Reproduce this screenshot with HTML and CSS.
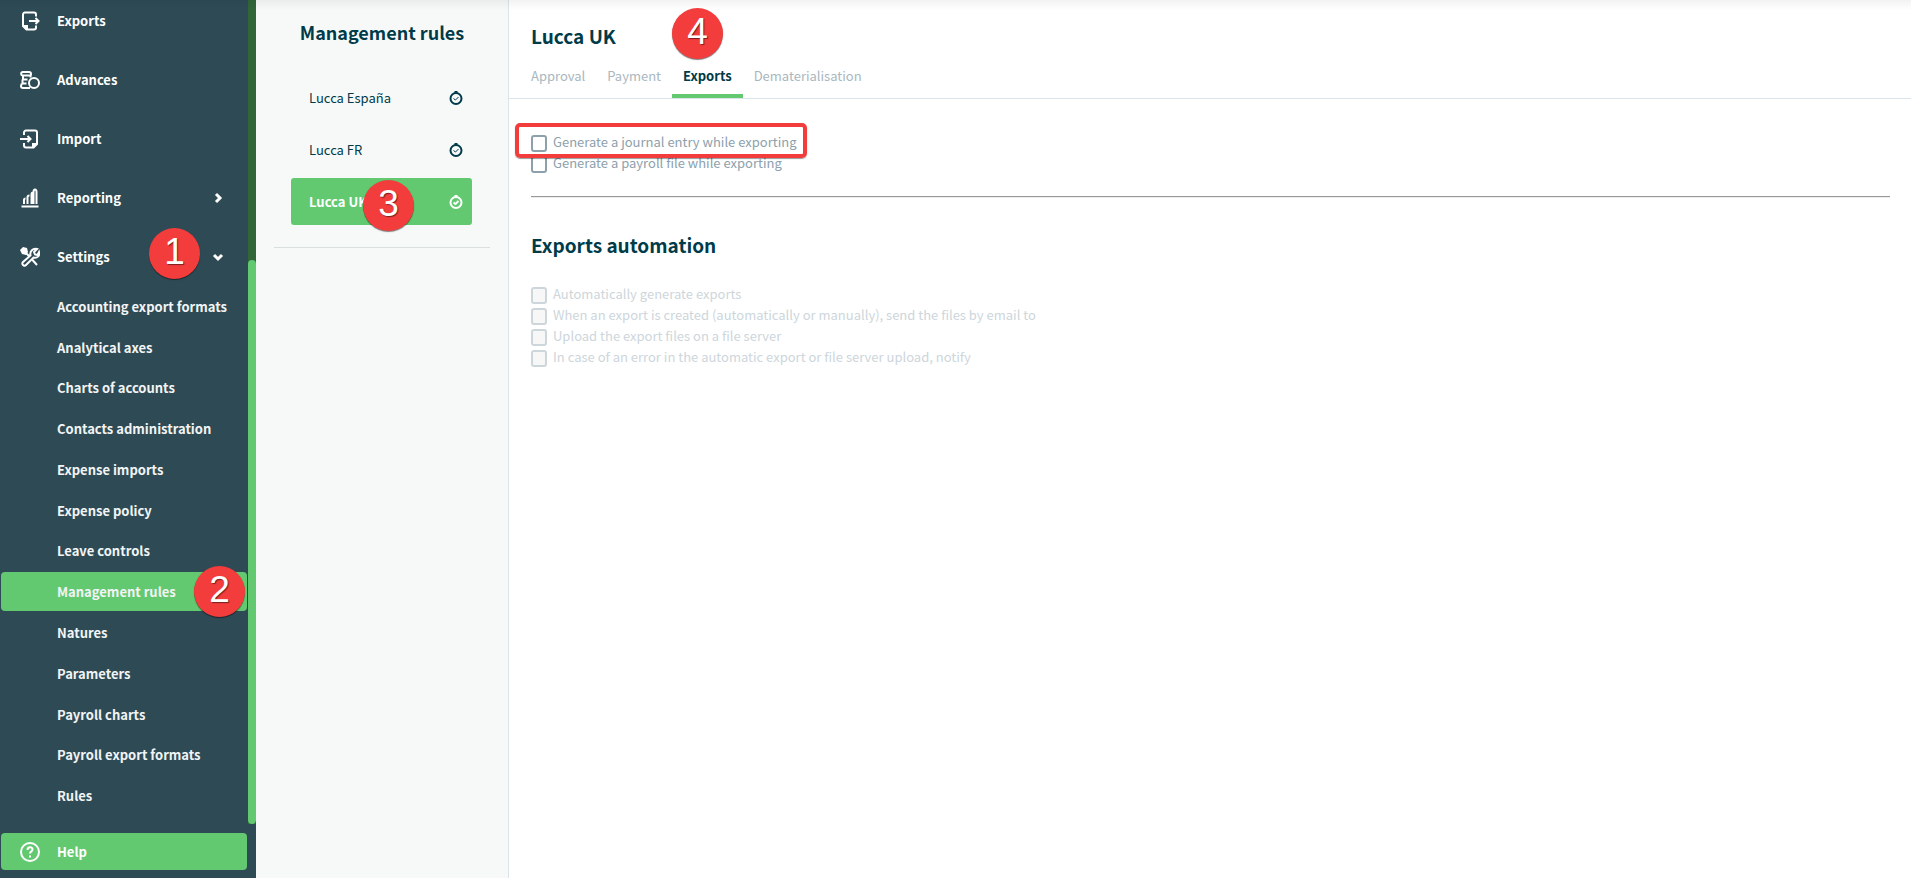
FILE: index.html
```html
<!DOCTYPE html>
<html lang="en">
<head>
<meta charset="utf-8">
<title>Management rules</title>
<link rel="stylesheet" href="styles.css">
</head>
<body>
<div class="app">
  <aside class="sidebar">
    <div class="scroll-area">
      <nav class="menu">
        <a class="menu-item" href="#"><svg class="icon" viewBox="0 0 20 20"><path d="M16 5.500V3.500a2 2 0 0 0-2-2H5a2 2 0 0 0-2 2V15l3.500 3.500H14a2 2 0 0 0 2-2V14.500M9 10h9M15.500 7l3 3-3 3"/><path class="fill" d="M2 14h6v5H6z"/></svg>Exports</a>
        <a class="menu-item" href="#"><svg class="icon" viewBox="0 0 20 20"><path d="M11 5.500V4q0-2-2-2H3Q1.200 2 1.200 3.800T3 5.500h7.500M3 5.500v4h4.500M2.500 9.500v4h4M2.500 13.500Q1 14 1 16t2 2h7M10.500 5.500v2"/><circle cx="14" cy="13" r="5"/></svg>Advances</a>
        <a class="menu-item" href="#"><svg class="icon" viewBox="0 0 20 20"><path d="M4 6V3.500a2 2 0 0 1 2-2h9a2 2 0 0 1 2 2V15l-3.500 3.500H6a2 2 0 0 1-2-2V14M0 10h10M7.500 7l3 3-3 3"/><path class="fill" d="M18 14h-6v5h2z"/></svg>Import</a>
        <a class="menu-item" href="#"><svg class="icon" viewBox="0 0 20 20"><path d="M1.500 18.500h17M4 16v-4q0-1.500 1.500-1.500M7.500 16V9Q7.500 7.500 9.500 7.500M11.500 16V6.500Q11.500 4.500 13 4.500M13.500 16V4q0-2.500 1.500-2.500T16.500 4v12"/></svg>Reporting<svg class="chevron" viewBox="0 0 12 12"><path d="M4 2l4 4-4 4"/></svg></a>
        <a class="menu-item" href="#"><svg class="icon" viewBox="0 0 20 20"><path class="fill" d="M0 3l3-3 4 1 1 4-2 3-4-1z"/><path d="M6 6l3 3M12.500 13l4.500 5M10.500 8.500C9.500 4 13 1 17 2l-3 3 1 2.500 2.500.5L19 5c1 4-2 6.500-5.500 5.500L6 18c-2 2-5-1-3-3z"/></svg>Settings<svg class="chevron" viewBox="0 0 12 12"><path d="M2 4l4 4 4-4"/></svg><span class="badge badge-1">1</span></a>
      </nav>
      <nav class="submenu">
        <a href="#">Accounting export formats</a>
        <a href="#">Analytical axes</a>
        <a href="#">Charts of accounts</a>
        <a href="#">Contacts administration</a>
        <a href="#">Expense imports</a>
        <a href="#">Expense policy</a>
        <a href="#">Leave controls</a>
        <a class="active" href="#">Management rules<span class="badge badge-2">2</span></a>
        <a href="#">Natures</a>
        <a href="#">Parameters</a>
        <a href="#">Payroll charts</a>
        <a href="#">Payroll export formats</a>
        <a href="#">Rules</a>
      </nav>
      <div class="scrollbar"><div class="thumb"></div></div>
    </div>
    <a class="help" href="#"><svg class="icon" viewBox="0 0 20 20"><circle cx="10" cy="10" r="9"/><path d="M7.500 8c0-3.500 5-3.500 5-.5 0 2-2.500 2-2.500 4M10 13.500v2"/></svg>Help</a>
  </aside>

  <section class="panel">
    <h2 class="panel-title">Management rules</h2>
    <nav class="rules">
      <a href="#">Lucca España<svg class="clock" viewBox="0 0 14 14"><circle cx="7" cy="7.500" r="5.500"/><path d="M5.500 1h3"/><path class="tick" d="M4.500 7.500l2 1.500 3-3"/></svg></a>
      <a href="#">Lucca FR<svg class="clock" viewBox="0 0 14 14"><circle cx="7" cy="7.500" r="5.500"/><path d="M5.500 1h3"/><path class="tick" d="M4.500 7.500l2 1.500 3-3"/></svg></a>
      <a class="active" href="#">Lucca UK<svg class="clock" viewBox="0 0 14 14"><circle cx="7" cy="7.500" r="5.500"/><path d="M5.500 1h3"/><path class="tick" d="M4.500 7.500l2 1.500 3-3"/></svg><span class="badge badge-3">3</span></a>
    </nav>
  </section>

  <main class="content">
    <header class="header">
      <h1>Lucca UK</h1>
      <nav class="tabs">
        <a href="#">Approval</a>
        <a href="#">Payment</a>
        <a class="active" href="#">Exports<span class="badge badge-4">4</span></a>
        <a href="#">Dematerialisation</a>
      </nav>
    </header>
    <div class="form">
      <div class="checks">
        <label class="highlight"><input type="checkbox">Generate a journal entry while exporting</label>
        <label><input type="checkbox">Generate a payroll file while exporting</label>
      </div>
      <hr>
      <h2>Exports automation</h2>
      <div class="checks">
        <label class="disabled"><input type="checkbox" disabled>Automatically generate exports</label>
        <label class="disabled"><input type="checkbox" disabled>When an export is created (automatically or manually), send the files by email to</label>
        <label class="disabled"><input type="checkbox" disabled>Upload the export files on a file server</label>
        <label class="disabled"><input type="checkbox" disabled>In case of an error in the automatic export or file server upload, notify</label>
      </div>
    </div>
  </main>
</div>
</body>
</html>
```
FILE: styles.css
```css
* { box-sizing: border-box; }

body {
  margin: 0;
  font-family: "Noto Sans CJK SC", "Open Sans", sans-serif;
  font-size: 13px;
  line-height: 21px;
  color: #003b49;
}

a { color: inherit; text-decoration: none; }
h1, h2 { margin: 0; font-weight: 700; line-height: 28px; }
svg { fill: none; stroke: currentColor; stroke-width: 2; flex: none; }

.app {
  position: relative;
  display: flex;
  height: 100vh;
  min-height: 640px;
  overflow: hidden;
}

.app::after {
  content: "";
  position: absolute;
  inset: 0 0 auto 0;
  height: 10px;
  background: linear-gradient(rgba(0, 0, 0, .05), transparent);
  pointer-events: none;
}

/* Sidebar */
.sidebar {
  display: flex;
  flex-direction: column;
  flex: none;
  width: 256px;
  background: #2e4b55;
  color: #fff;
}

.scroll-area {
  position: relative;
  display: flex;
  flex-direction: column;
  flex: 1;
  min-height: 0;
  padding: 0 9px 8px 1px;
}

.menu { margin-top: -9px; }

.menu-item, .help {
  position: relative;
  display: flex;
  align-items: center;
  font-size: 13px;
  font-weight: 700;
}

.menu-item { height: 59px; padding: 0 23px 0 19px; }
.icon { width: 20px; height: 20px; margin-right: 17px; }
.icon .fill { fill: currentColor; stroke: none; }
.chevron { width: 12px; height: 12px; margin-left: auto; stroke-width: 3; }

.submenu { display: flex; flex-direction: column; flex: 1; }

.submenu a {
  position: relative;
  display: flex;
  align-items: center;
  flex: 1;
  margin: 1px 0;
  padding-left: 56px;
  border-radius: 4px;
  color: #f2f4f5;
  font-weight: 700;
}

.submenu .active, .help { background: #62c971; }

.scrollbar {
  position: absolute;
  inset: 0 0 0 auto;
  display: flex;
  align-items: flex-end;
  width: 8px;
  background: #316639;
}

.thumb { width: 8px; height: 68.5%; border-radius: 4px; background: #62c971; }

.help {
  height: 37px;
  margin: 9px 9px 8px 1px;
  padding-left: 19px;
  border-radius: 4px;
}

/* Rules panel */
.panel {
  flex: none;
  width: 253px;
  padding: 18px;
  border-right: 1px solid #dbe4e8;
  background: #f7f9f9;
}

.panel-title { font-size: 18px; text-align: center; }

.rules {
  display: flex;
  flex-direction: column;
  gap: 5px;
  margin-top: 28px;
  padding: 0 18px 22px 17px;
  border-bottom: 1px solid #dadfe0;
}

.rules a {
  position: relative;
  display: flex;
  align-items: center;
  justify-content: space-between;
  height: 47px;
  padding: 0 9px 0 18px;
  border-radius: 3px;
}

.rules .active { background: #62c971; color: #fff; font-weight: 700; }
.clock { width: 14px; height: 14px; }
.clock .tick { stroke-width: 1; }
.rules .active .tick { stroke-width: 2; }

/* Content */
.content { flex: 1; min-width: 0; background: #fff; }
.header { padding: 22px 22px 0; border-bottom: 1px solid #dbe4e8; }
h1, .form h2 { font-size: 19px; }

.tabs { display: flex; margin: 15px -11px 0; }

.tabs a {
  position: relative;
  padding: 0 11px 8px;
  border-bottom: 4px solid transparent;
  color: #a9b7be;
}

.tabs .active { border-color: #62c971; color: #003b49; font-weight: 700; }

.form { padding: 32px 21px 32px 22px; }
.checks { display: flex; flex-direction: column; align-items: flex-start; }

.checks label {
  position: relative;
  display: flex;
  align-items: center;
  gap: 6px;
  color: #8da1ac;
}

.checks input {
  appearance: none;
  width: 16px;
  height: 17px;
  margin: 4px 0 0;
  border: 2px solid #8da1ac;
  border-radius: 3px;
  background: #fff;
}

.checks .disabled { color: #cdd6db; }
.checks .disabled input { border-color: #cdd6db; background: #f7f7f7; }

.highlight::after {
  content: "";
  position: absolute;
  inset: -8px -10px -6px -16px;
  z-index: 1;
  border: 4px solid #f33c3c;
  border-radius: 5px;
  box-shadow: 0 1px 1px rgba(0, 0, 0, .4);
}

.form hr {
  margin: 23px 0 33px;
  border: 0;
  border-top: 1px solid #999;
  border-bottom: 1px solid #eee;
}

.form h2 + .checks { margin-top: 24px; }

/* Step markers laid over the controls */
.badge {
  position: absolute;
  z-index: 2;
  width: 51px;
  height: 51px;
  border-radius: 50%;
  background: #f33c3c;
  box-shadow: 0 1px 1px rgba(0, 0, 0, .5);
  color: #fff;
  font: 400 37px/48px "Liberation Sans", Arial, sans-serif;
  text-align: center;
  text-shadow: 1px 1px 1px rgba(0, 0, 0, .5);
}

.badge-1 { top: 1px; right: 47px; }
.badge-2 { top: -6px; right: 2px; }
.badge-3 { top: 2px; left: 72px; }
.badge-4 { top: -57px; left: 0; }
```
